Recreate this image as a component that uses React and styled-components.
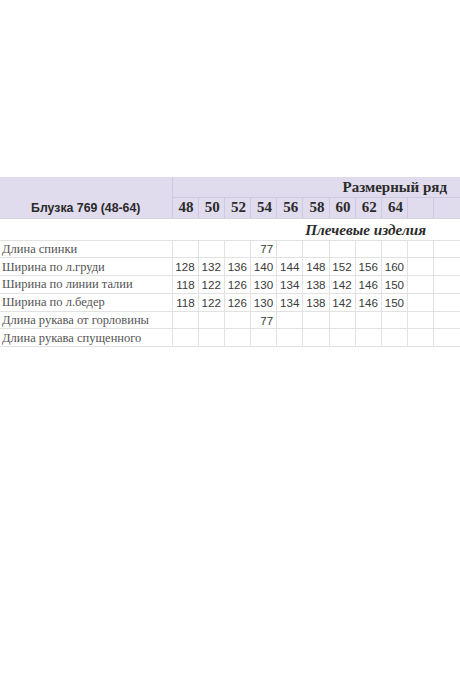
import React from "react";
import styled, { createGlobalStyle } from "styled-components";

const Global = createGlobalStyle`
  html, body { margin: 0; padding: 0; background: #ffffff; }
  body { width: 460px; height: 690px; overflow: hidden; }
`;

const Page = styled.div`
  padding-top: 177px;
  width: 460px;
`;

const Table = styled.table`
  width: 460px;
  border-collapse: collapse;
  table-layout: fixed;
`;

const HeadRow = styled.tr`
  height: ${(p) => p.$h}px;
  background: #e0dbed;
`;

const TitleCell = styled.td`
  border-right: 1px solid #d0c9e2;
  border-bottom: 1px solid #d6d1e0;
  padding: 0 0 3px 0;
  vertical-align: bottom;
  text-align: center;
  font-family: "Liberation Sans", Arial, sans-serif;
  font-weight: bold;
  font-size: 12.3px;
  color: #2a2a2a;
`;

const RangeCell = styled.td`
  border-bottom: 1px solid #cfc8e0;
  padding: 2px 13px 0 0;
  text-align: right;
  font-family: "Liberation Serif", "Times New Roman", serif;
  font-weight: bold;
  font-size: 15px;
  color: #2b2b2b;
`;

const SizeCell = styled.td`
  border-right: 1px solid #d0c9e2;
  border-bottom: 1px solid #d6d1e0;
  padding: 0 0 0 2px;
  text-align: center;
  font-family: "Liberation Serif", "Times New Roman", serif;
  font-weight: bold;
  font-size: 15px;
  color: #2b2b2b;
  &:last-child { border-right: none; }
`;

const CategoryRow = styled.tr`
  height: 22px;
`;

const CategoryCell = styled.td`
  border-bottom: 1px solid #e2e2e2;
  padding: 1px 34px 0 0;
  text-align: right;
  font-family: "Liberation Serif", "Times New Roman", serif;
  font-weight: bold;
  font-style: italic;
  font-size: 15.2px;
  color: #2b2b2b;
`;

const DataRow = styled.tr`
  height: 17.8px;
`;

const LabelCell = styled.td`
  border-bottom: 1px solid #e2e2e2;
  border-right: 1px solid #e2e2e2;
  padding: 1px 0 0 2px;
  white-space: nowrap;
  overflow: hidden;
  font-family: "Liberation Serif", "Times New Roman", serif;
  font-size: 12.5px;
  color: #555555;
`;

const ValueCell = styled.td`
  border-bottom: 1px solid #e2e2e2;
  border-right: 1px solid #e2e2e2;
  padding: 0 3px 0 0;
  text-align: right;
  font-family: "Liberation Sans", Arial, sans-serif;
  font-size: 11.6px;
  color: #3a3a3a;
  &:last-child { border-right: none; }
`;

const sizes = [48, 50, 52, 54, 56, 58, 60, 62, 64, "", ""];

const rows = [
  { label: "Длина спинки", values: { 3: "77" } },
  { label: "Ширина по л.груди", values: [128, 132, 136, 140, 144, 148, 152, 156, 160] },
  { label: "Ширина по линии талии", values: [118, 122, 126, 130, 134, 138, 142, 146, 150] },
  { label: "Ширина по л.бедер", values: [118, 122, 126, 130, 134, 138, 142, 146, 150] },
  { label: "Длина рукава от горловины", values: { 3: "77" } },
  { label: "Длина рукава спущенного", values: {} },
];

export default function App() {
  return (
    <Page>
      <Global />
      <Table>
        <colgroup>
          <col style={{ width: 172 }} />
          {sizes.map((_, i) => (
            <col key={i} />
          ))}
        </colgroup>
        <tbody>
          <HeadRow $h={20}>
            <TitleCell rowSpan={2}>Блузка 769 (48-64)</TitleCell>
            <RangeCell colSpan={11}>Размерный ряд</RangeCell>
          </HeadRow>
          <HeadRow $h={21}>
            {sizes.map((s, i) => (
              <SizeCell key={i}>{s}</SizeCell>
            ))}
          </HeadRow>
          <CategoryRow>
            <CategoryCell colSpan={12}>Плечевые изделия</CategoryCell>
          </CategoryRow>
          {rows.map((r) => (
            <DataRow key={r.label}>
              <LabelCell>{r.label}</LabelCell>
              {sizes.map((_, i) => (
                <ValueCell key={i}>{r.values[i] ?? ""}</ValueCell>
              ))}
            </DataRow>
          ))}
        </tbody>
      </Table>
    </Page>
  );
}
